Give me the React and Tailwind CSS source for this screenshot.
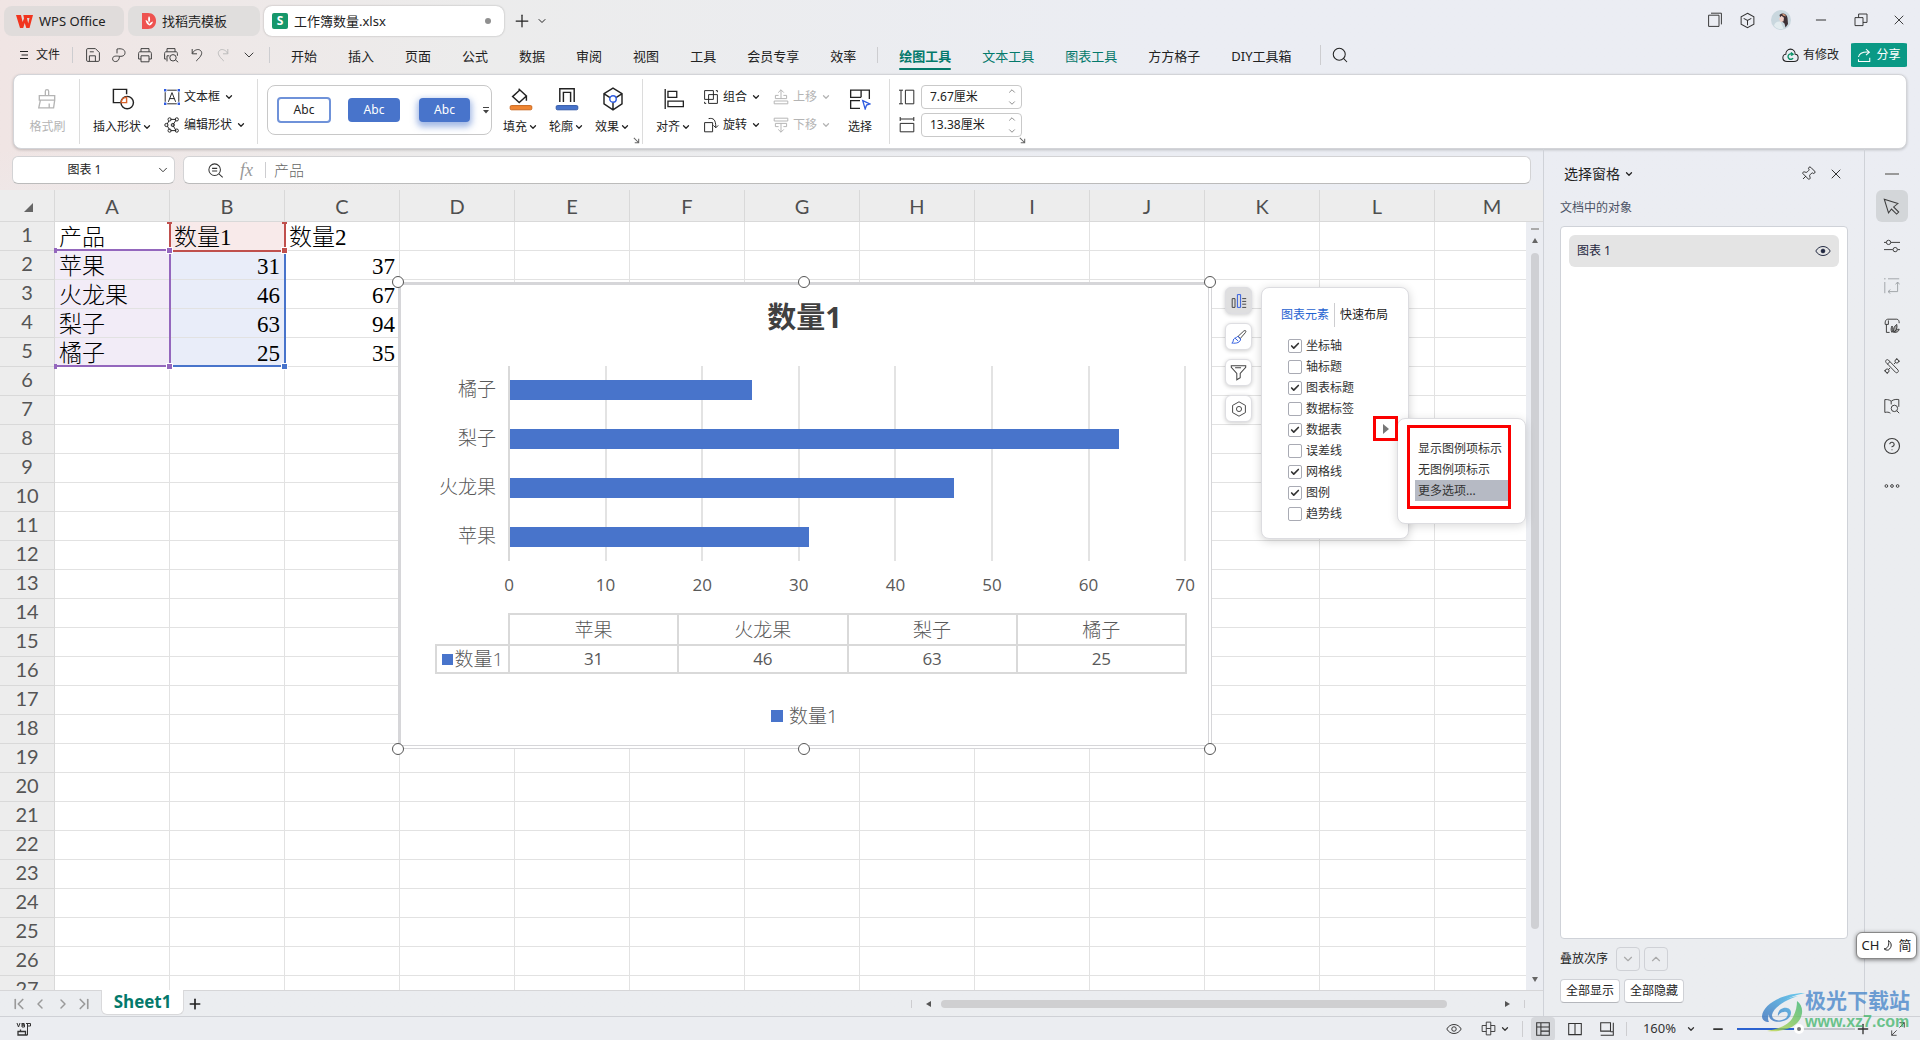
import clsx from "clsx";
import {
  Check,
  ChevronDown,
  ChevronLeft,
  ChevronRight,
  ChevronUp,
  ChevronFirst,
  ChevronLast,
  CircleHelp,
  Minus,
  Pin,
  Plus,
  Search,
  X,
} from "lucide-react";

const COLUMNS = ["A", "B", "C", "D", "E", "F", "G", "H", "I", "J", "K", "L", "M"];
const ROWS = Array.from({ length: 27 }, (_, i) => i + 1);

const SHEET = [
  ["产品", "数量1", "数量2"],
  ["苹果", 31, 37],
  ["火龙果", 46, 67],
  ["梨子", 63, 94],
  ["橘子", 25, 35],
];

const SERIES = [
  { name: "苹果", value: 31 },
  { name: "火龙果", value: 46 },
  { name: "梨子", value: 63 },
  { name: "橘子", value: 25 },
];

const MENU = ["开始", "插入", "页面", "公式", "数据", "审阅", "视图", "工具", "会员专享", "效率"];

const ELEMENTS = [
  { label: "坐标轴", on: true },
  { label: "轴标题", on: false },
  { label: "图表标题", on: true },
  { label: "数据标签", on: false },
  { label: "数据表", on: true },
  { label: "误差线", on: false },
  { label: "网格线", on: true },
  { label: "图例", on: true },
  { label: "趋势线", on: false },
];

function Icon({ size = 18, box = 20, className, children }) {
  return (
    <svg
      width={size}
      height={size}
      viewBox={`0 0 ${box} ${box}`}
      fill="none"
      stroke="currentColor"
      strokeWidth="1.2"
      className={clsx("shrink-0", className)}
      aria-hidden="true"
    >
      {children}
    </svg>
  );
}

function Caret({ className }) {
  return <ChevronDown className={clsx("size-2.5 shrink-0", className)} strokeWidth={3} />;
}

/* ---------- title bar ---------- */

function TitleBar() {
  return (
    <header className="flex h-9 shrink-0 items-end pl-1 text-[13px] leading-5">
      <button className="flex h-[30px] w-[120px] items-center gap-1.5 rounded-lg bg-[#e0dcdb] pl-3">
        <svg width="17" height="13" viewBox="0 0 17 13" aria-hidden="true">
          <path d="M0 0h5l1.600 7L8 3.500 7.300 0H17l-3.500 13h-3.200L8.700 8l-1.500 5H4z" fill="#f1351f" />
          <path d="M11 3l1.200 5.500L13.500 3z" fill="#e0dcdb" />
        </svg>
        WPS Office
      </button>
      <button className="ml-1 flex h-[30px] w-[132px] items-center gap-1.5 rounded-lg bg-[#e0dedd] pl-3.5">
        <svg width="14" height="16" viewBox="0 0 14 16" aria-hidden="true">
          <path d="M0 0h6c5 0 8 3.500 8 8s-3 8-8 8H0z" fill="#ee5350" />
          <path d="M7 3c1.500 2 1.500 4.500 0 6.500C5.800 7.500 5.800 5 7 3z" fill="#fff" />
          <path d="M3.500 7c.5 3 2 5 4 5.500 2-.500 3-2 3.500-4-2 .3-3 1.500-3.700 2.700C6.500 9 5.500 7.500 3.500 7z" fill="#fff" />
        </svg>
        找稻壳模板
      </button>
      <button className="ml-1 flex h-[30px] w-60 items-center gap-1.5 rounded-lg bg-white pl-2 shadow-[0_0_2px_rgba(0,0,0,0.3)]">
        <span className="flex size-4 items-center justify-center rounded-[2px] bg-[#16976b] font-['Open_Sans'] text-xs font-bold text-white">
          S
        </span>
        工作簿数量.xlsx
        <span className="mr-[13px] ml-auto size-1.5 rounded-full bg-[#8f8f8f]" />
      </button>
      <div className="flex h-[30px] items-center">
        <button aria-label="新建" className="ml-2">
          <Plus className="size-5" strokeWidth={1.500} />
        </button>
        <button aria-label="标签列表" className="ml-1">
          <ChevronDown className="size-3" strokeWidth={2} />
        </button>
      </div>
      <div className="mb-1 ml-auto flex h-6 items-center text-[#333]">
        <button aria-label="窗口" className="w-8">
          <Icon size={16} className="mx-auto">
            <path d="M2 4h13v14H2zM5 1.500h13v14" />
          </Icon>
        </button>
        <button aria-label="应用" className="w-8">
          <Icon size={17} className="mx-auto">
            <path d="M10 1.500l7.500 4.200v8.600L10 18.500l-7.500-4.200V5.700zM5.500 7.500L10 10l4.500-2.500M10 10v5.500" />
          </Icon>
        </button>
        <button aria-label="账号" className="w-9">
          <svg width="20" height="20" viewBox="0 0 20 20" className="mx-auto" aria-hidden="true">
            <circle cx="10" cy="10" r="10" fill="#c9d7de" />
            <path d="M8.500 5c2.500-3 7.500-1.500 8 3l.5 6-2.500 3.500-1-4-3.500-3z" fill="#3d3035" />
            <path d="M8 8.500l2.500-2.800 2.500 2-.5 3.500-3 1z" fill="#f0cfc6" />
            <path d="M11 3.500l3 1 1 2-3-1z" fill="#d79a78" />
            <path d="M3 15.500C4 12 6.500 11 9.500 11.500l3 7c-4 1.500-7.500 0-9.500-3z" fill="#e3ecef" />
          </svg>
        </button>
        <button aria-label="最小化" className="w-11">
          <Minus className="mx-auto size-4" strokeWidth={1.500} />
        </button>
        <button aria-label="还原" className="w-9">
          <Icon size={16} className="mx-auto">
            <path d="M2.500 7h10v10h-10zM7 7V2.500h10.500V13h-5" />
          </Icon>
        </button>
        <button aria-label="关闭" className="mr-px w-10">
          <X className="mx-auto size-4" strokeWidth={1.400} />
        </button>
      </div>
    </header>
  );
}

/* ---------- menu row ---------- */

function Divider({ className }) {
  return <span className={clsx("w-px shrink-0 bg-[#cdcdd0]", className)} />;
}

function MenuBar() {
  return (
    <nav className="flex h-[38px] shrink-0 items-center text-[13px] leading-5 whitespace-nowrap">
      <button className="ml-[19px] flex items-center gap-[7px] text-xs">
        <Icon size={10}>
          <path d="M2 3h16M5 10h13M2 17h16" strokeWidth="2.200" />
        </Icon>
        文件
      </button>
      <Divider className="ml-3 h-4" />
      <div className="ml-3 flex items-center gap-2.5 text-[#3c3c3c]">
        <button aria-label="保存">
          <Icon size={16}>
            <path d="M2 3.500C2 2.500 2.500 2 3.500 2H13l5 5v9.500c0 1-.5 1.500-1.500 1.500h-13C2.500 18 2 17.500 2 16.500zM5.500 18v-7H13v7M6 6h5" />
          </Icon>
        </button>
        <button aria-label="输出为PDF">
          <Icon size={16}>
            <path d="M7.500 8V2.500C13 1.500 17.500 3 17.500 7c0 4.500-4 5-8 4.500-4-.5-7.500 0-7.500 3.200 0 2.300 1.500 3.500 3.500 3.500 3 0 5-2.200 5-6.500" />
          </Icon>
        </button>
        <button aria-label="打印">
          <Icon size={16}>
            <path d="M5 6V2h10v4M5 15H2V8c0-1 .5-2 1.500-2h13c1 0 1.500 1 1.500 2v7h-3M5 11h10v7.500H5z" />
          </Icon>
        </button>
        <button aria-label="打印预览">
          <Icon size={16}>
            <path d="M5 6V2h10v4M4 15H2V8c0-1 .5-2 1.500-2h13c1 0 1.500 1 1.500 2v3M5 18V11h3M16 16.500l3 2.500" />
            <circle cx="12.500" cy="13.500" r="4" />
          </Icon>
        </button>
        <button aria-label="撤销">
          <Icon size={16}>
            <path d="M4 2.500v6h6M4 8C7 3 12 2 14.500 4.500c3 3 1 7-5.500 13" />
          </Icon>
        </button>
        <button aria-label="恢复" className="text-[#b9b9b9]">
          <Icon size={16}>
            <path d="M16 2.500v6h-6M16 8C13 3 8 2 5.500 4.500c-3 3-1 7 5.500 13" />
          </Icon>
        </button>
        <button aria-label="更多">
          <ChevronDown className="size-4" strokeWidth={1.500} />
        </button>
      </div>
      <Divider className="ml-3 h-4" />
      <div className="ml-[21px] flex gap-[31px] pt-0.5">
        {MENU.map((m) => (
          <button key={m}>{m}</button>
        ))}
      </div>
      <Divider className="ml-[21px] h-4" />
      <div className="ml-[21px] flex gap-[31px] pt-0.5">
        <button className="relative font-bold text-[#04796b]">
          绘图工具
          <span className="absolute inset-x-0 top-[22px] h-0.5 rounded bg-[#04796b]" />
        </button>
        <button className="text-[#04796b]">文本工具</button>
        <button className="text-[#04796b]">图表工具</button>
        <button>方方格子</button>
        <button>DIY工具箱</button>
      </div>
      <Divider className="ml-7 h-5" />
      <button aria-label="搜索" className="ml-2.5">
        <Search className="size-[18px]" strokeWidth={1.400} />
      </button>
      <button className="ml-auto flex items-center gap-1 text-xs">
        <Icon size={17}>
          <path d="M6 17c-3 0-5-2-5-4.500C1 10 3 8.500 4.500 8.500 4.500 5 7 2.500 10 2.500S15.500 5 15.500 8.500C17.500 8.500 19 10 19 12.500S17 17 14 17z" />
          <path d="M13 9.500A3.200 3.200 0 1 0 13 13M10.500 6.500l2.500 2-2.500 1.500" stroke="#0b9368" strokeWidth="1.600" />
        </Icon>
        有修改
      </button>
      <button className="mr-[13px] ml-3 flex h-[30px] w-14 items-center justify-center gap-1 rounded bg-clip-content py-[3px] text-xs text-white bg-[#0a9985]">
        <Icon size={15}>
          <path d="M2 12c1-5 6-7 14-6.500M12 1.500l4.500 4-4.500 4M2 15v3h15v-5" strokeWidth="1.400" />
        </Icon>
        分享
      </button>
    </nav>
  );
}

/* ---------- ribbon ---------- */

function BigTool({ icon, label, caret = true, disabled }) {
  return (
    <button disabled={disabled} className="flex flex-col items-center gap-1 pt-0.5 text-xs leading-5 disabled:text-[#b4b4b4]">
      <span className="flex h-7 items-center">{icon}</span>
      <span className="flex items-center gap-px">
        {label}
        {caret && <Caret />}
      </span>
    </button>
  );
}

function RowTool({ icon, label, disabled }) {
  return (
    <button disabled={disabled} className="flex h-7 items-center gap-1 text-xs disabled:text-[#b4b4b4]">
      {icon}
      {label}
      <Caret />
    </button>
  );
}

function SizeInput({ id, label, value, icon }) {
  return (
    <div className="flex h-7 items-center gap-1.5">
      <label htmlFor={id} aria-label={label}>
        {icon}
      </label>
      <div className="flex h-6 w-[101px] items-center rounded border border-[#c9c9c9] pr-1 pl-2">
        <input id={id} defaultValue={value} className="w-full min-w-0 text-xs outline-none" />
        <span className="flex flex-col gap-0.5 text-[#777]">
          <button aria-label="增加">
            <ChevronUp className="size-2.5" strokeWidth={2} />
          </button>
          <button aria-label="减少">
            <ChevronDown className="size-2.5" strokeWidth={2} />
          </button>
        </span>
      </div>
    </div>
  );
}

function Launcher() {
  return (
    <button aria-label="更多设置" className="absolute right-0.5 bottom-0 text-[#666]">
      <Icon size={7} box={8}>
        <path d="M1 1l5 5M6.500 2v4.500H2" />
      </Icon>
    </button>
  );
}

function Ribbon() {
  return (
    <section className="mx-[13px] flex h-[75px] shrink-0 rounded-lg border border-[#d3d4d8] bg-white py-1 whitespace-nowrap shadow-[0_1px_3px_rgba(0,0,0,0.2)]">
      <div className="flex w-[66px] justify-center border-r border-[#dcdcdc] pt-1 pl-0.5">
        <BigTool
          disabled
          caret={false}
          label="格式刷"
          icon={
            <Icon size={22}>
              <path d="M8.500 7V3a1.500 1.500 0 0 1 3 0v4M3 7h14v4H3zM4 11l-1.500 7h13.500l1-7M12 14v4" />
            </Icon>
          }
        />
      </div>
      <div className="flex w-[178px] gap-3 border-r border-[#dcdcdc] pt-1 pl-[13px]">
        <BigTool
          label="插入形状"
          icon={
            <Icon size={24}>
              <path d="M8 13H2V2h11v4" />
              <circle cx="13.500" cy="13" r="5.200" />
              <path d="M13 13H8.500c0-2.500 2-4.500 4.500-4.500z" stroke="#d8622a" />
            </Icon>
          }
        />
        <div>
          <RowTool
            label="文本框"
            icon={
              <Icon size={16}>
                <path d="M4 1.500h12M4 18.500h12M1.500 4v12M18.500 4v12M5.500 16L10 4.500 14.500 16M7 12h6" />
                <path d="M0 1.500h3M17 1.500h3M0 18.500h3M17 18.500h3" stroke="#2e5be0" strokeWidth="3" />
              </Icon>
            }
          />
          <RowTool
            label="编辑形状"
            icon={
              <Icon size={16}>
                <path d="M8 3h7M4 9l2-4M4 11l3 5M8 17h7M11 10l4-6M11 10l4 7" />
                <circle cx="7" cy="3" r="2" />
                <circle cx="16" cy="3" r="2" />
                <circle cx="3" cy="10" r="2" />
                <circle cx="11" cy="10" r="2" />
                <circle cx="7" cy="17" r="2" />
                <circle cx="16" cy="17" r="2" />
              </Icon>
            }
          />
        </div>
      </div>
      <div className="relative flex w-[385px] gap-[11px] border-r border-[#dcdcdc] pt-1 pl-[9px]">
        <div className="mt-0.5 flex h-[50px] w-[225px] items-center rounded-lg border border-[#c8c8c8] pl-[9px] text-xs">
          <button className="h-[26px] w-[54px] rounded border-2 border-[#6f92d9] bg-white">Abc</button>
          <button className="ml-[17px] h-6 w-[52px] rounded bg-[#4874cb] text-white">Abc</button>
          <button className="ml-[19px] h-6 w-[51px] rounded bg-[#4874cb] text-white shadow-[0_3px_6px_2px_rgba(72,116,203,0.5)]">
            Abc
          </button>
          <button aria-label="更多样式" className="ml-[13px]">
            <svg width="6" height="7" viewBox="0 0 6 7" aria-hidden="true">
              <path d="M0 0h6v1H0zM0 3h6L3 6.500z" fill="#444" />
            </svg>
          </button>
        </div>
        <BigTool
          label="填充"
          icon={
            <Icon size={24}>
              <path d="M8 1.500l6.500 6-6 5.500-5.500-5 6-5.500M14.500 7.500v4" />
              <rect x="1" y="15.500" width="18" height="3.500" rx="1" fill="#f08632" stroke="#c9641a" strokeWidth=".8" />
            </Icon>
          }
        />
        <BigTool
          label="轮廓"
          icon={
            <Icon size={24}>
              <path d="M4 12.500V1.500h12v11M7 12.500V4.500h6v8" />
              <rect x="1" y="15.500" width="18" height="3.500" rx="1" fill="#4874cb" stroke="#2f56a5" strokeWidth=".8" />
            </Icon>
          }
        />
        <BigTool
          label="效果"
          icon={
            <Icon size={24}>
              <path d="M10 1l7.500 4.500v8.500L10 19l-7.500-5V5.500zM3 6l4.500 2.800M17 6l-4.500 2.800M10 13v6" />
              <circle cx="10" cy="10" r="2.700" stroke="#2e5be0" />
            </Icon>
          }
        />
        <Launcher />
      </div>
      <div className="flex w-[247px] border-r border-[#dcdcdc] pt-1 pl-[13px]">
        <BigTool
          label="对齐"
          icon={
            <Icon size={22}>
              <path d="M2 1v18M4.500 3h8v5.500h-8zM4.500 12h14v5h-14z" />
            </Icon>
          }
        />
        <div className="ml-3">
          <RowTool
            label="组合"
            icon={
              <Icon size={16}>
                <path d="M2 2h11v11H2zM7 7h11v11H7zM16 2h2v2M2 16v2h2" />
              </Icon>
            }
          />
          <RowTool
            label="旋转"
            icon={
              <Icon size={16}>
                <path d="M2 7h10v11.500H2zM7 2c6-1 9 1 9 11M13 10.500l3 3 3-3" />
              </Icon>
            }
          />
        </div>
        <div className="ml-3">
          <RowTool
            disabled
            label="上移"
            icon={
              <Icon size={16}>
                <path d="M10 12V1M6.500 4.500L10 1l3.500 3.500M7 8H3v4h14V8h-4M1.500 15h17v3.500h-17z" />
              </Icon>
            }
          />
          <RowTool
            disabled
            label="下移"
            icon={
              <Icon size={16}>
                <path d="M10 8v11M6.500 15.500L10 19l3.500-3.500M7 12H3V8h14v4h-4M1.500 1.500h17V5h-17z" />
              </Icon>
            }
          />
        </div>
        <div className="ml-[17px]">
          <BigTool
            caret={false}
            label="选择"
            icon={
              <Icon size={22}>
                <path d="M18.500 10V2H11v6.500M11 2H1.500v6.500H11M10 18.500H1.500V11.500H10" />
                <path d="M12.500 11.500l6.500 3-3 1-1.300 3.500z" stroke="#2e5be0" />
              </Icon>
            }
          />
        </div>
      </div>
      <div className="relative w-[138px] pt-1 pl-[9px]">
        <SizeInput
          id="shape-height"
          label="高度"
          value="7.67厘米"
          icon={
            <Icon size={16}>
              <path d="M2.500 1.500v17M0 1.500h5M0 18.500h5M8 1.500h10.500v17H8z" />
            </Icon>
          }
        />
        <SizeInput
          id="shape-width"
          label="宽度"
          value="13.38厘米"
          icon={
            <Icon size={16}>
              <path d="M1.500 2.500h17M1.500 0v5M18.500 0v5M1.500 8h17v10.500h-17z" />
            </Icon>
          }
        />
        <Launcher />
      </div>
    </section>
  );
}

/* ---------- sheet ---------- */

function FormulaBar() {
  return (
    <div className="flex h-[41px] shrink-0 gap-2 px-3 pt-[7px]">
      <div className="flex h-7 w-[163px] items-center rounded-md border border-[#d3d3d5] border-b-[#bbb] bg-white pr-1">
        <input aria-label="名称框" defaultValue="图表 1" className="w-full min-w-0 text-center text-xs outline-none" />
        <button aria-label="展开名称">
          <ChevronDown className="size-3.5" strokeWidth={1.500} />
        </button>
      </div>
      <div className="flex h-7 min-w-0 flex-1 items-center rounded-md border border-[#d3d3d5] border-b-[#bbb] bg-white pl-[23px]">
        <Icon size={17} className="text-[#333]">
          <circle cx="9" cy="9" r="6.800" />
          <path d="M14 14l4.500 4M6 7.500h6M6 10.500h6" />
        </Icon>
        <span className="ml-4 font-['Liberation_Serif'] text-lg leading-5 text-[#999] italic">fx</span>
        <Divider className="ml-3 h-4" />
        <input
          aria-label="编辑栏"
          defaultValue="产品"
          className="ml-2 w-full min-w-0 text-[15px] leading-5 font-light text-[#666] outline-none"
        />
      </div>
    </div>
  );
}

function cellTone(r, c) {
  if (c === 0 && r > 0 && r < 5) return "bg-[#f2ecf7]";
  if (c === 1 && r === 0) return "bg-[#f8eaea]";
  if (c === 1 && r > 0 && r < 5) return "bg-[#e9edf9]";
  return "bg-white";
}

function Grid() {
  return (
    <table className="w-[1550px] table-fixed border-separate border-spacing-0">
      <colgroup>
        <col className="w-[55px]" />
        {COLUMNS.map((c) => (
          <col key={c} className="w-[115px]" />
        ))}
      </colgroup>
      <thead>
        <tr className="h-8">
          <th className="border-r border-b border-[#d9d9d9] bg-[#ededed]">
            <svg width="10" height="9" viewBox="0 0 10 9" className="mt-1 ml-6" aria-hidden="true">
              <path d="M9 0v9H0z" fill="#666" />
            </svg>
          </th>
          {COLUMNS.map((c) => (
            <th
              key={c}
              className="border-r border-b border-[#d9d9d9] bg-[#ededed] p-0 font-['Lato'] text-xl leading-6 font-normal text-[#4f4f4f]"
            >
              {c}
            </th>
          ))}
        </tr>
      </thead>
      <tbody>
        {ROWS.map((n, r) => (
          <tr key={n} className="h-[29px]">
            <th className="border-r border-b border-[#d9d9d9] bg-[#ededed] p-0 pb-1 font-['Lato'] text-xl leading-6 font-normal text-[#555]">
              {n}
            </th>
            {COLUMNS.map((col, c) => {
              const v = SHEET[r]?.[c];
              return (
                <td
                  key={col}
                  className={clsx(
                    "border-r border-b border-[#e2e2e2] px-1 pt-1 pb-0 font-['Liberation_Serif','Noto_Sans_CJK_SC',serif] text-[23px] leading-6 font-light whitespace-nowrap text-black",
                    typeof v === "number" && "text-right",
                    cellTone(r, c),
                  )}
                >
                  {v}
                </td>
              );
            })}
          </tr>
        ))}
      </tbody>
    </table>
  );
}

// source ranges of the selected chart
function RangeMarks() {
  return (
    <>
      <div className="absolute top-8 left-[169px] h-[30px] w-[117px] border-x-2 border-b-2 border-[#c0504d]" />
      <div className="absolute top-[60px] left-[169px] h-[117px] w-[117px] border-r-2 border-b-2 border-[#4874cb]" />
      <div className="absolute top-[59px] left-[55px] h-[118px] w-[116px] border-2 border-l-0 border-[#9467bd]" />
      <i className="absolute top-[58px] left-[54px] h-[5px] w-[3px] bg-[#9467bd]" />
      <i className="absolute top-[174px] left-[54px] h-[5px] w-[3px] bg-[#9467bd]" />
      <i className="absolute top-8 left-[167px] h-0.5 w-[5px] bg-[#c0504d]" />
      <i className="absolute top-8 left-[282px] h-0.5 w-[5px] bg-[#c0504d]" />
      <i className="absolute top-[58px] left-[167px] size-[5px] bg-[#9467bd] outline outline-white" />
      <i className="absolute top-[174px] left-[167px] size-[5px] bg-[#9467bd] outline outline-white" />
      <i className="absolute top-[58px] left-[282px] size-[5px] bg-[#c0504d] outline outline-white" />
      <i className="absolute top-[174px] left-[282px] size-[5px] bg-[#4874cb] outline outline-white" />
    </>
  );
}

const UNIT = 9.66;
const AXIS_X = 107;

function Plot() {
  const bars = [...SERIES].reverse();
  return (
    <svg viewBox="0 0 807 250" className="block w-full" role="img" aria-label="数量1">
      {[0, 10, 20, 30, 40, 50, 60, 70].map((t) => {
        const x = AXIS_X + t * UNIT;
        return (
          <g key={t}>
            <rect x={Math.round(x)} y="15" width="2" height="195" fill={t ? "#e3e3e3" : "#d9d9d9"} />
            <text x={x + 1} y="240" textAnchor="middle" fill="#595959" className="font-['Open_Sans'] text-[17px]">
              {t}
            </text>
          </g>
        );
      })}
      {bars.map((b, i) => (
        <g key={b.name}>
          <rect x={AXIS_X + 2} y={29 + i * 49} width={Math.round(b.value * UNIT)} height="20" fill="#4874cb" />
          <text
            x={AXIS_X - 12}
            y={45 + i * 49}
            textAnchor="end"
            fill="#595959"
            className="font-['Noto_Sans_CJK_SC'] text-[19px] font-light"
          >
            {b.name}
          </text>
        </g>
      ))}
    </svg>
  );
}

function Chart() {
  return (
    <div className="absolute top-[92px] left-[398px] w-[814px]">
      <div className="h-[467px] border-t-3 border-r-4 border-b-4 border-l-3 border-[#d6d6d9] bg-white text-[#595959] [border-bottom-style:double] [border-right-style:double]">
        <h2 className="h-[66px] text-center text-[29px] leading-[64px] font-bold text-[#404040]">数量1</h2>
        <Plot />
        <table className="mt-3 ml-[34px] w-[752px] table-fixed border-collapse text-center font-['Open_Sans','Noto_Sans_CJK_SC',sans-serif] text-[17px] leading-6">
          <thead>
            <tr className="h-[31px]">
              <td className="w-[73px]" />
              {SERIES.map((s) => (
                <th key={s.name} className="border-2 border-[#d9d9d9] p-0 text-[19px] font-light">
                  {s.name}
                </th>
              ))}
            </tr>
          </thead>
          <tbody>
            <tr className="h-7">
              <th className="border-2 border-[#d9d9d9] p-0 font-light whitespace-nowrap">
                <span className="flex items-center justify-center gap-0.5 text-[19px] leading-6">
                  <i className="size-[11px] bg-[#4874cb]" />
                  数量1
                </span>
              </th>
              {SERIES.map((s) => (
                <td key={s.name} className="border-2 border-[#d9d9d9] p-0">
                  {s.value}
                </td>
              ))}
            </tr>
          </tbody>
        </table>
        <div className="mt-[30px] flex items-center justify-center gap-1.5 text-[19px] leading-6 font-light">
          <i className="size-3 bg-[#4874cb]" />
          数量1
        </div>
      </div>
      {[
        "-left-1.5 -top-1.5",
        "left-[400px] -top-1.5",
        "-right-1 -top-1.5",
        "-left-1.5 -bottom-1.5",
        "left-[400px] -bottom-1.5",
        "-right-1 -bottom-1.5",
      ].map((pos) => (
        <i key={pos} className={clsx("absolute size-3 rounded-full border border-[#555] bg-white", pos)} />
      ))}
    </div>
  );
}

function ChartTools() {
  const box = "flex size-[27px] items-center justify-center rounded-md border border-[#dedee2] shadow-[0_1px_4px_rgba(0,0,0,0.2)]";
  return (
    <div className="absolute top-[97px] left-[1225px] flex flex-col gap-[9px] text-[#444]">
      <button aria-label="图表元素" className={clsx(box, "bg-[#dfdfe0]")}>
        <Icon size={16}>
          <path d="M1.500 7h3.500v11H1.500zM14 7h5M14 10.500h5M14 14h5M14 18h5" />
          <path d="M8 2h4v16H8z" stroke="#2e5be0" />
        </Icon>
      </button>
      <button aria-label="图表样式" className={clsx(box, "bg-white")}>
        <Icon size={16}>
          <path d="M9 9l7-6.500c2-1.500 3.500 0 2 2L11.500 12z" />
          <path d="M8.500 9l3.500 3.500c0 4-5 6-11 5 3-2 1-3 2.500-5s3-1 5-3.500zM5 11.500l4 3.500" stroke="#2e5be0" />
        </Icon>
      </button>
      <button aria-label="图表筛选" className={clsx(box, "bg-white")}>
        <Icon size={17}>
          <path d="M1.500 2h17v2L12 11v5l-4 2.500V11L1.500 4zM6 4.500h7" />
        </Icon>
      </button>
      <button aria-label="设置" className={clsx(box, "bg-white")}>
        <Icon size={16}>
          <path d="M10 1l8 4.500v9L10 19l-8-4.500v-9z" />
          <circle cx="10" cy="10" r="3.200" />
        </Icon>
      </button>
    </div>
  );
}

function ElementsPanel() {
  return (
    <div className="absolute top-[97px] left-[1261px] h-[252px] w-[148px] rounded-lg border border-[#dcdce0] bg-white pt-[15px] text-xs shadow-[0_2px_10px_rgba(0,0,0,0.18)]">
      <div className="flex h-6 items-center pl-[19px]">
        <button className="text-[#1f62d0]">图表元素</button>
        <Divider className="mx-[5px] h-6" />
        <button>快速布局</button>
      </div>
      <ul className="mt-2 pl-[26px] text-[#333]">
        {ELEMENTS.map((e) => (
          <li key={e.label}>
            <label className="flex h-[21px] items-center gap-1">
              <span className="grid size-3.5 shrink-0 place-items-center">
                <input
                  type="checkbox"
                  defaultChecked={e.on}
                  className="peer col-start-1 row-start-1 size-3.5 appearance-none rounded-[2px] border border-[#a9abb4] bg-white"
                />
                <Check className="pointer-events-none col-start-1 row-start-1 hidden size-2.5 peer-checked:block" strokeWidth={4} />
              </span>
              {e.label}
            </label>
          </li>
        ))}
      </ul>
    </div>
  );
}

function Submenu() {
  return (
    <>
      <div className="absolute top-[228px] left-[1397px] h-[106px] w-[129px] rounded-lg border border-[#dcdce0] bg-white px-[17px] pt-[19px] text-xs text-[#333] shadow-[0_2px_10px_rgba(0,0,0,0.15)]">
        <button className="block h-[21px] w-full pl-[3px] text-left whitespace-nowrap">显示图例项标示</button>
        <button className="block h-[21px] w-full pl-[3px] text-left">无图例项标示</button>
        <button className="block h-[21px] w-full bg-[#b6bac4] pl-[3px] text-left">更多选项...</button>
      </div>
      <div className="pointer-events-none absolute top-[235px] left-[1407px] h-[84px] w-[104px] border-3 border-[#fb0000]" />
      <button
        aria-label="数据表选项"
        className="absolute top-[226px] left-[1373px] flex size-[25px] items-center justify-center border-3 border-[#fb0000] bg-white"
      >
        <svg width="6" height="10" viewBox="0 0 6 10" aria-hidden="true">
          <path d="M0 0l6 5-6 5z" fill="#777" />
        </svg>
      </button>
    </>
  );
}

function VerticalScroll() {
  return (
    <div className="flex w-[17px] shrink-0 flex-col">
      <div className="h-8 border-b border-[#d9d9d9] bg-[#ededed]" />
      <div className="flex flex-1 flex-col items-center bg-[#ebedf2] pt-1.5">
        <i className="h-0.5 w-2 bg-[#aaa]" />
        <svg width="6" height="5" viewBox="0 0 6 5" className="mt-2" aria-hidden="true">
          <path d="M3 0l3 5H0z" fill="#666" />
        </svg>
        <i className="mt-2.5 mb-12 w-2 flex-1 rounded-full bg-[#cfd0d4]" />
        <svg width="6" height="5" viewBox="0 0 6 5" className="mb-2" aria-hidden="true">
          <path d="M3 5l3-5H0z" fill="#666" />
        </svg>
      </div>
    </div>
  );
}

function SheetTabs() {
  return (
    <div className="flex h-[26px] shrink-0 items-center border-t border-[#d6d6d8]">
      <div className="flex items-center pl-2.5 text-[#9a9a9a]">
        <button aria-label="第一张">
          <ChevronFirst className="size-[18px]" strokeWidth={2.200} />
        </button>
        <button aria-label="上一张" className="ml-1">
          <ChevronLeft className="size-4" strokeWidth={2.200} />
        </button>
        <button aria-label="下一张" className="ml-[7px]">
          <ChevronRight className="size-4" strokeWidth={2.200} />
        </button>
        <button aria-label="最后一张" className="ml-1">
          <ChevronLast className="size-[18px]" strokeWidth={2.200} />
        </button>
      </div>
      <button className="-mt-[3px] ml-2 h-[25px] w-[83px] rounded-b-md border border-t-0 border-[#d9d9db] bg-white font-['Open_Sans'] text-[17px] leading-6 font-bold text-[#04796b]">
        Sheet1
      </button>
      <button aria-label="新建工作表" className="ml-[3px]">
        <Plus className="size-4" strokeWidth={2.500} />
      </button>
      <div className="mr-[18px] ml-auto flex w-[614px] items-center text-[#666]">
        <Divider className="h-2 bg-[#999]" />
        <svg width="5" height="6" viewBox="0 0 5 6" className="ml-3.5" aria-hidden="true">
          <path d="M5 0v6L0 3z" fill="#555" />
        </svg>
        <i className="mr-[58px] ml-2.5 h-2 flex-1 rounded-full bg-[#cfcfd1]" />
        <svg width="5" height="6" viewBox="0 0 5 6" className="mr-3.5" aria-hidden="true">
          <path d="M0 0v6l5-3z" fill="#555" />
        </svg>
        <Divider className="h-2 bg-[#999]" />
      </div>
    </div>
  );
}

/* ---------- right side ---------- */

function SelectionPane() {
  const pill = "h-6 rounded border border-[#cfd1d6] border-b-[#b5b7bc] bg-white px-[5px] text-xs";
  const step = "flex size-6 items-center justify-center rounded border border-[#cfd1d6] text-[#aaa]";
  return (
    <aside className="flex w-[322px] shrink-0 flex-col border-x border-[#cfd2d8] px-4">
      <div className="flex h-[50px] items-center px-1 text-sm">
        选择窗格
        <Caret className="ml-1" />
        <button aria-label="固定" className="ml-auto">
          <Pin className="size-4 rotate-45" strokeWidth={1.300} />
        </button>
        <button aria-label="关闭窗格" className="ml-3">
          <X className="size-4" strokeWidth={1.400} />
        </button>
      </div>
      <p className="h-[27px] text-xs leading-[18px] text-[#4c5365]">文档中的对象</p>
      <div className="flex-1 rounded border border-[#cfd2d8] bg-white p-2">
        <div className="flex h-8 items-center justify-between rounded-md bg-[#e4e4e4] px-2 text-xs text-[#1f2740]">
          图表 1
          <button aria-label="显示">
            <Icon size={16}>
              <path d="M1 10c4-7.500 14-7.500 18 0-4 7.500-14 7.500-18 0z" />
              <circle cx="10" cy="10" r="2.300" fill="currentColor" />
            </Icon>
          </button>
        </div>
      </div>
      <div className="mt-2 flex h-6 items-center gap-1 text-xs">
        <span className="mr-1">叠放次序</span>
        <button disabled aria-label="下移一层" className={step}>
          <ChevronDown className="size-3.5" />
        </button>
        <button disabled aria-label="上移一层" className={step}>
          <ChevronUp className="size-3.5" />
        </button>
      </div>
      <div className="mt-2 mb-[13px] flex gap-1">
        <button className={pill}>全部显示</button>
        <button className={pill}>全部隐藏</button>
      </div>
    </aside>
  );
}

function SideTools() {
  return (
    <div className="flex w-[55px] shrink-0 flex-col items-center pt-6 pr-0.5 text-[#3c3c3c]">
      <i className="mb-[15px] h-0.5 w-3.5 bg-[#999]" />
      <div className="flex flex-col gap-2 [&>button]:flex [&>button]:size-8 [&>button]:items-center [&>button]:justify-center [&>button]:rounded-md">
        <button aria-label="选择" className="bg-[#d3d6d9]">
          <Icon size={17}>
            <path d="M1.500 1.500l16 5-5 4 6 6-2.500 2.500-6-6-3.500 4.500z" />
          </Icon>
        </button>
        <button aria-label="属性">
          <Icon size={16}>
            <path d="M0 5.500h3M8.500 5.500H20M0 14.500h11M17 14.500h3" />
            <circle cx="5.700" cy="5.500" r="2.700" />
            <circle cx="14" cy="14.500" r="2.700" />
          </Icon>
        </button>
        <button aria-label="变换" className="text-[#a0a4a8]">
          <Icon size={16}>
            <path d="M5 1h14M1 5v14M0 1h2M17 5v12H5M14.500 8L17 5l2.500 3M8 14.500L5 17l3 2.500" />
          </Icon>
        </button>
        <button aria-label="稻壳">
          <Icon size={16}>
            <path d="M1.500 8h4V3M1.500 8C1 3 3 1.500 5 1.500h11c2 0 3 2 3 5M3 8v10h4" />
            <path d="M10 18c-2-3-1-6 0-8 1.500 2 1.500 6 0 8zM12 18c-.5-5 1-8 4-10 1 5-1 8-4 10zM13 18c1-3 3-4 6-4-.5 3-3 4-6 4z" fill="#aaa" />
          </Icon>
        </button>
        <button aria-label="工具">
          <Icon size={16}>
            <path d="M2.500 5.500c-1.500-2 1-4.500 3-3l12 12.500c1.500 2-1 4.500-3 3zM4 8l3.500-3.500" />
            <circle cx="16" cy="4" r="2.300" />
            <circle cx="4" cy="16" r="2.300" />
            <path d="M14.500 5.500l-2 2M7.500 12.500l-2 2M16 0v2M18 4h2M4 18v2M0 16h2" />
          </Icon>
        </button>
        <button aria-label="查找">
          <Icon size={16}>
            <path d="M9 4C6 1.500 3 2 1 2v16c3-.5 5-.5 7 1M9 4v4M9 4c3-2.500 7-2.500 9.500-2v9M16 16l3 3" />
            <circle cx="13" cy="13" r="4" />
          </Icon>
        </button>
        <button aria-label="帮助">
          <CircleHelp className="size-[18px]" strokeWidth={1.500} />
        </button>
        <button aria-label="更多">
          <Icon size={16}>
            <circle cx="3" cy="10" r="1.700" />
            <circle cx="10" cy="10" r="1.700" />
            <circle cx="17" cy="10" r="1.700" />
          </Icon>
        </button>
      </div>
    </div>
  );
}

/* ---------- status bar ---------- */

function StatusBar() {
  return (
    <footer className="flex h-6 shrink-0 items-center border-t border-[#cfd1d6] bg-[#ebedf1] text-[#333]">
      <button aria-label="宏" className="ml-4">
        <svg width="16" height="14" viewBox="0 0 16 14" fill="none" stroke="currentColor" aria-hidden="true">
          <path d="M1 1l1.500 4L4 1M6 1v4M6 1.500h2.200V3H6M6 3h2.500v2H6M11.500 13V1.500M10 1.500h4.500V4H12" />
          <path d="M4.500 7.500v2M2 13V9.500h7.500V13zM9.500 13h2" strokeWidth="1.300" />
        </svg>
      </button>
      <div className="mr-[15px] ml-auto flex items-center">
        <button aria-label="护眼模式">
          <Icon size={16}>
            <path d="M1 10c4-7.500 14-7.500 18 0-4 7.500-14 7.500-18 0z" />
            <circle cx="10" cy="10" r="2.800" />
          </Icon>
        </button>
        <button aria-label="阅读模式" className="ml-[19px] flex items-center gap-1">
          <Icon size={15}>
            <path d="M7 1.500h6v17H7zM7 6H1.500v8H7M13 6h5.500v8H13M7 10h6" />
          </Icon>
          <Caret />
        </button>
        <Divider className="ml-3 h-4" />
        <button aria-label="普通视图" className="ml-2 flex size-6 items-center justify-center rounded bg-[#d6d8dc]">
          <Icon size={14}>
            <path d="M1 1h18v18H1zM1 7h18M7 1v18M7 13h12" strokeWidth="1.500" />
          </Icon>
        </button>
        <button aria-label="分页预览" className="ml-[13px]">
          <Icon size={14}>
            <path d="M1 2h18v16H1zM10 2v16" strokeWidth="1.500" />
          </Icon>
        </button>
        <button aria-label="页面布局" className="ml-[18px]">
          <Icon size={14}>
            <path d="M1 1h14v12H1zM19 1v18H1M19 14h-4" strokeWidth="1.500" />
          </Icon>
        </button>
        <Divider className="ml-3 h-3.5" />
        <button className="ml-4 flex items-center text-[13px]">
          160%
          <Caret className="ml-2.5" />
        </button>
        <button aria-label="缩小" className="ml-[15px]">
          <Minus className="size-3.5" strokeWidth={3} />
        </button>
        <input
          type="range"
          aria-label="缩放"
          defaultValue={53}
          className="mx-3 h-0.5 w-[118px] appearance-none bg-linear-to-r from-[#2b62d0] from-53% to-[#c3c6cc] to-53% [&::-webkit-slider-thumb]:size-2.5 [&::-webkit-slider-thumb]:appearance-none [&::-webkit-slider-thumb]:rounded-full [&::-webkit-slider-thumb]:border-3 [&::-webkit-slider-thumb]:border-white [&::-webkit-slider-thumb]:bg-[#777]"
        />
        <button aria-label="放大" className="-ml-3">
          <Plus className="size-4" strokeWidth={2} />
        </button>
        <button aria-label="全屏" className="ml-5">
          <Icon size={14}>
            <path d="M12 1h7v7M19 1l-7 7M8 19H1v-7M1 19l7-7" />
          </Icon>
        </button>
      </div>
    </footer>
  );
}

function Watermark() {
  return (
    <div className="pointer-events-none absolute right-2.5 bottom-1.5 flex items-start opacity-75">
      <svg width="44" height="42" viewBox="0 0 44 42" className="mt-1" aria-hidden="true">
        <defs>
          <linearGradient id="swirl-blue" x1="1" y1="0" x2="0" y2="1">
            <stop offset="0" stopColor="#3ec0ee" />
            <stop offset="1" stopColor="#2c66b8" />
          </linearGradient>
          <linearGradient id="swirl-green" x1="1" y1="0" x2="0" y2="1">
            <stop offset="0" stopColor="#2fb36b" />
            <stop offset="1" stopColor="#c3d83c" />
          </linearGradient>
        </defs>
        <path d="M44 1C22 1 2 12 1 24c0 4 3 6 7 6C3 22 18 6 44 1z" fill="url(#swirl-blue)" />
        <path
          d="M37 4C24 8 12 16 11 23c0 6 9 7 14 3 3-3 2-7-2-6-3 0-5 2-6 4-1-5 4-9 9-8 6 1 5 9-1 12-8 4-18 1-17-6C9 13 22 6 37 4z"
          fill="url(#swirl-blue)"
        />
        <path d="M36 9c7 5 7 16-1 23-7 6-18 8-29 7 12-2 22-6 26-14 3-6 4-11 4-16z" fill="url(#swirl-green)" />
      </svg>
      <div className="leading-none font-bold">
        <div className="text-[21px] leading-6 text-[#4182c8]">极光下载站</div>
        <div className="font-['Liberation_Sans'] text-base leading-5 text-[#40b468]">www.xz7.com</div>
      </div>
    </div>
  );
}

export default function App() {
  return (
    <div className="relative flex h-screen flex-col overflow-hidden bg-linear-to-r from-[#f0e5e4] via-[#ececec] via-25% to-[#ebedf3] to-60% font-['Noto_Sans','Noto_Sans_CJK_SC',sans-serif] text-[#222]">
      <TitleBar />
      <MenuBar />
      <Ribbon />
      <div className="flex min-h-0 flex-1 bg-linear-to-b from-transparent to-[#ebedf0] to-20%">
        <main className="flex min-w-0 flex-1 flex-col">
          <FormulaBar />
          <div className="relative flex min-h-0 flex-1">
            <div className="min-w-0 flex-1 overflow-hidden">
              <Grid />
            </div>
            <VerticalScroll />
            <RangeMarks />
            <Chart />
            <ChartTools />
            <ElementsPanel />
            <Submenu />
          </div>
          <SheetTabs />
        </main>
        <SelectionPane />
        <SideTools />
      </div>
      <StatusBar />
      <div className="absolute right-[3px] bottom-[81px] flex h-[27px] w-[61px] items-center justify-center gap-1 rounded-md border border-[#888] bg-white text-[13px] shadow-[0_1px_4px_rgba(0,0,0,0.5)]">
        CH
        <Icon size={11}>
          <path d="M10 1c6 4 7 12 0 17-3 1-6 0-8-2 6 0 10-6 8-15z" strokeWidth="1.800" />
        </Icon>
        简
      </div>
      <Watermark />
    </div>
  );
}
